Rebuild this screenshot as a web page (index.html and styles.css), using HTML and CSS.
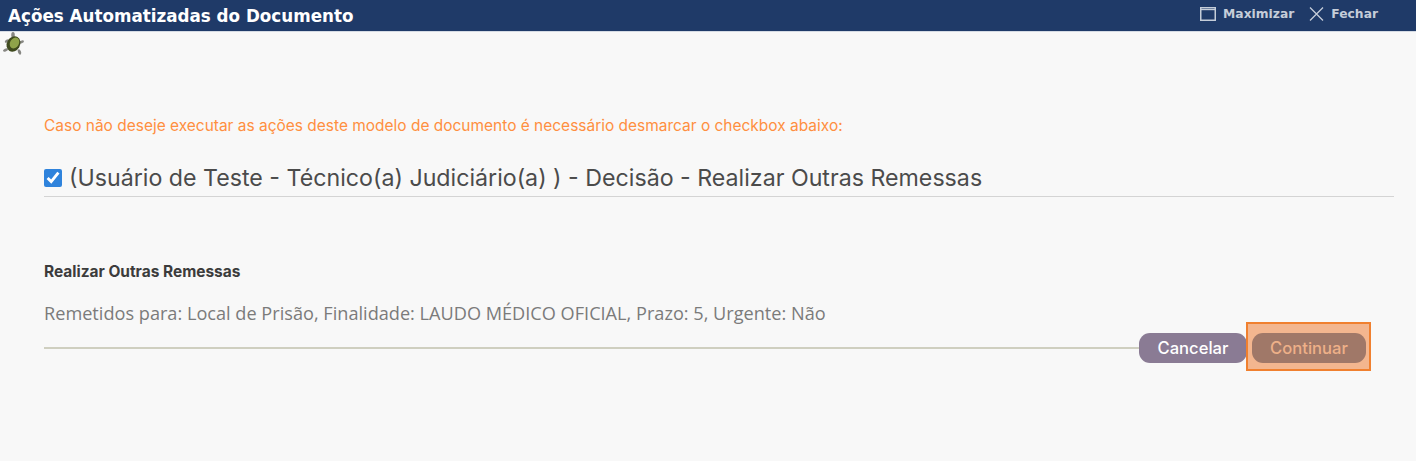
FILE: index.html
```html
<!DOCTYPE html>
<html lang="pt-BR">
<head>
<meta charset="utf-8">
<title>Ações Automatizadas do Documento</title>
<link rel="stylesheet" href="styles.css">
</head>
<body>
<header class="titlebar">
  <h1 class="title">Ações Automatizadas do Documento</h1>
  <div class="window-actions">
    <span class="window-action">
      <svg width="16" height="14" viewBox="0 0 16 14" aria-hidden="true"><rect x=".75" y=".75" width="14.5" height="12.5" fill="none" stroke="#c5cdd9" stroke-width="1.5"/><path d="M1 2.6h14" stroke="#c5cdd9" stroke-width="1.2"/></svg>
      Maximizar
    </span>
    <span class="window-action">
      <svg width="15" height="14" viewBox="0 0 15 14" aria-hidden="true"><path d="M1 .5l13 13M14 .5l-13 13" stroke="#c5cdd9" stroke-width="1.3" fill="none"/></svg>
      Fechar
    </span>
  </div>
</header>
<div class="turtle-row">
  <svg class="turtle" width="22" height="24" viewBox="0 0 22 24" aria-hidden="true">
    <g fill="#74746f" opacity=".85">
      <ellipse cx="10" cy="3" rx="1.8" ry="3"/>
      <ellipse cx="4" cy="9" rx="2.4" ry="1.4" transform="rotate(-30 4 9)"/>
      <ellipse cx="18.5" cy="10" rx="2.6" ry="1.4" transform="rotate(-20 18.5 10)"/>
      <ellipse cx="2.5" cy="18" rx="2.6" ry="1.4" transform="rotate(-25 2.5 18)"/>
      <ellipse cx="16.5" cy="20" rx="1.5" ry="2.8" transform="rotate(-25 16.5 20)"/>
    </g>
    <ellipse cx="10.5" cy="12" rx="6.6" ry="8" fill="#3f4a1e" transform="rotate(30 10.5 12)"/>
    <ellipse cx="11.5" cy="11" rx="4.4" ry="5.8" fill="#8fa34a" transform="rotate(30 11.5 11)"/>
  </svg>
</div>
<main class="content">
  <p class="warning">Caso não deseje executar as ações deste modelo de documento é necessário desmarcar o checkbox abaixo:</p>
  <label class="check-row">
    <input class="check" type="checkbox" checked>
    <span class="check-label">(Usuário de Teste - Técnico(a) Judiciário(a) ) - Decisão - Realizar Outras Remessas</span>
  </label>
  <h2 class="section-title">Realizar Outras Remessas</h2>
  <p class="detail">Remetidos para: Local de Prisão, Finalidade: LAUDO MÉDICO OFICIAL, Prazo: 5, Urgente: Não</p>
  <div class="actions">
    <div class="rule"></div>
    <button class="btn btn-cancel" type="button">Cancelar</button>
    <div class="highlight"><button class="btn btn-continue" type="button">Continuar</button></div>
  </div>
</main>
</body>
</html>
```
FILE: styles.css
```css
* { box-sizing: border-box; }
html, body { margin: 0; height: 100%; }
body { background: #f8f8f8; font-family: Inter, "Liberation Sans", sans-serif; overflow: hidden; }
.titlebar { height: 32px; background: #1f3a68; border-bottom: 1px solid #d5dbe4; display: flex; justify-content: space-between; padding: 0 38px 0 8px; }
.title { margin: 6px 0 0; font: bold 16.75px/20px "DejaVu Sans", sans-serif; color: #fff; }
.window-actions { display: flex; gap: 15px; margin-top: 7px; height: 14px; }
.window-action { display: flex; align-items: center; gap: 7px; font: bold 12.3px/14px "DejaVu Sans", sans-serif; color: #c5cdd9; }
.turtle-row { height: 25px; padding-left: 3px; }
.turtle { display: block; filter: blur(.4px); }
.content { padding: 0 22px 0 44px; }
.warning { margin: 59px 0 0; font-size: 15.48px; line-height: 20px; color: #ff8f40; }
.check-row { display: flex; align-items: center; gap: 7px; margin-top: 23px; height: 38px; padding-bottom: 2px; border-bottom: 1px solid #d4d4d4; font-size: 23.2px; color: #4b4b4b; }
.check-label { padding-top: 2px; }
.check { width: 18px; height: 18px; margin: 3px 0 0; accent-color: #2f83dc; }
.section-title { margin: 65px 0 0; font-size: 15.46px; line-height: 20px; font-weight: 700; color: #3c3c3c; }
.detail { margin: 19px 0 0; font: 18.15px/24px "Open Sans", sans-serif; color: #7b7b7b; }
.actions { display: flex; align-items: center; margin-top: -3px; height: 49px; }
.rule { flex: 1; height: 2px; background: #cfcfc0; margin-top: 3px; }
.btn { height: 30px; border: 0; border-radius: 11px; font: 500 16.6px/30px Inter, sans-serif; padding: 0; }
.btn-cancel { width: 108px; background: #8a7b94; color: #fff; margin-top: 3px; }
.highlight { background: #f3b68f; border: 2px solid #f0802f; width: 125px; height: 49px; padding: 9px 3px 0 4px; margin-left: -1px; margin-right: 23px; }
.btn-continue { width: 114px; background: #a07868; color: #eeb088; display: block; }
```
